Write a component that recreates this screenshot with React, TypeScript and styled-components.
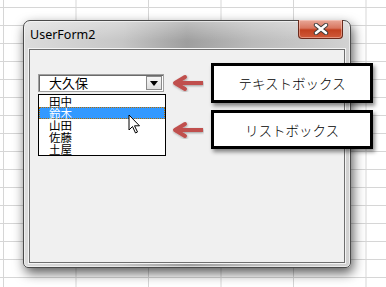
import React from "react";
import styled, { createGlobalStyle } from "styled-components";

const GlobalStyle = createGlobalStyle`
  html, body {
    margin: 0;
    padding: 0;
    width: 386px;
    height: 287px;
    overflow: hidden;
    background: #ffffff;
  }
`;

const Sheet = styled.div`
  position: relative;
  width: 386px;
  height: 287px;
  box-sizing: border-box;
  padding: 20px 0 0 23px;
  background-color: #ffffff;
  background-image: linear-gradient(to right, #d6d6d6 1px, transparent 1px),
    linear-gradient(to bottom, #d6d6d6 1px, transparent 1px);
  background-size: 72.5px 18px;
  background-position: 3px 7px;
`;

const Window = styled.div`
  position: relative;
  width: 328px;
  height: 248px;
  box-sizing: border-box;
  display: flex;
  flex-direction: column;
  border: 1px solid #4a4a4a;
  border-radius: 7px 7px 5px 5px;
  background: linear-gradient(
      to bottom,
      rgba(255, 255, 255, 0.35),
      rgba(255, 255, 255, 0) 20px
    ),
    linear-gradient(
      to right,
      #dcdcdc 0%,
      #c6c6c6 30%,
      #9e9e9e 50%,
      #bababa 70%,
      #d2d2d2 100%
    );
  box-shadow: 2px 5px 12px rgba(0, 0, 0, 0.65),
    inset 0 0 0 1px rgba(255, 255, 255, 0.55);
`;

const TitleBar = styled.div`
  height: 28px;
  display: flex;
  align-items: flex-start;
  padding-left: 6px;
`;

const Title = styled.span`
  margin-top: 6px;
  font-family: "Noto Sans", "Open Sans", sans-serif;
  font-size: 12.5px;
  line-height: 16px;
  color: #000;
`;

const CloseButton = styled.div`
  margin-left: auto;
  margin-right: 7px;
  margin-top: -1px;
  width: 45px;
  height: 19px;
  box-sizing: border-box;
  display: flex;
  align-items: center;
  justify-content: center;
  border: 1px solid #6b2a1c;
  border-top: none;
  border-radius: 0 0 4px 4px;
  background: linear-gradient(
    to bottom,
    #e9a898 0%,
    #d8765f 45%,
    #c2401f 55%,
    #cf5a3a 100%
  );
  box-shadow: inset 0 0 0 1px rgba(255, 220, 210, 0.45);
`;

const Client = styled.div`
  flex: 1;
  margin: 0 5px 4px 5px;
  box-sizing: border-box;
  border: 1px solid #6e6e6e;
  outline: 1px solid #f4f4f4;
  background: #f0f0f0;
  display: flex;
  flex-direction: column;
  align-items: flex-start;
  gap: 2px;
  padding: 24px 0 0 8px;
`;

const Combo = styled.div`
  width: 126px;
  height: 18px;
  box-sizing: border-box;
  border: 1px solid #a0a0a0;
  box-shadow: inset 1px 1px 0 #6a6a6a;
  background: #ffffff;
  display: flex;
  align-items: center;
  padding: 0 1px 0 10px;
`;

const ComboText = styled.span`
  flex: 1;
  font-family: "Noto Sans CJK JP", sans-serif;
  font-size: 13px;
  line-height: 16px;
  color: #000;
`;

const DropButton = styled.div`
  width: 16px;
  height: 14px;
  box-sizing: border-box;
  border: 1px solid #8a8a8a;
  background: linear-gradient(#f6f6f6, #dedede);
  display: flex;
  align-items: center;
  justify-content: center;
`;

const ListBox = styled.div`
  width: 128px;
  height: 62px;
  box-sizing: border-box;
  border: 1px solid #000;
  background: #fff;
  display: flex;
  flex-direction: column;
  position: relative;
`;

const ListItem = styled.div<{ $selected?: boolean }>`
  height: 12px;
  box-sizing: border-box;
  font-family: "Noto Sans CJK JP", sans-serif;
  font-size: 11.5px;
  color: ${(p) => (p.$selected ? "#ffffff" : "#000000")};
  background: ${(p) => (p.$selected ? "#3399ff" : "transparent")};
  border: ${(p) => (p.$selected ? "1px dotted #b36b00" : "none")};
  padding-left: ${(p) => (p.$selected ? "9px" : "10px")};
  line-height: ${(p) => (p.$selected ? "10px" : "12px")};
`;

const Pointer = styled.svg`
  position: absolute;
  left: 89px;
  top: 19px;
`;

const Annotations = styled.div`
  position: absolute;
  left: 172px;
  top: 63px;
  display: flex;
  flex-direction: column;
  gap: 7px;
`;

const Callout = styled.div`
  display: flex;
  align-items: center;
  gap: 7px;
`;

const LabelBox = styled.div<{ $h: number }>`
  width: 162px;
  height: ${(p) => p.$h}px;
  box-sizing: border-box;
  border: 3px solid #000;
  background: #fff;
  box-shadow: 2px 3px 4px rgba(0, 0, 0, 0.45);
  display: flex;
  align-items: center;
  justify-content: center;
  font-family: "Noto Sans CJK JP", sans-serif;
  font-weight: 300;
  font-size: 13.5px;
  color: #000;
`;

const Arrow = () => (
  <svg width="32" height="18" viewBox="0 0 32 18">
    <defs>
      <filter id="sh" x="-20%" y="-30%" width="140%" height="160%">
        <feDropShadow dx="0.5" dy="1" stdDeviation="0.8" floodOpacity="0.35" />
      </filter>
    </defs>
    <g
      stroke="#c0504d"
      strokeWidth="4"
      fill="none"
      strokeLinecap="round"
      strokeLinejoin="round"
      filter="url(#sh)"
    >
      <path d="M3 9 H31" strokeLinecap="butt" />
      <path d="M13 3 L3 9 L13 15" />
    </g>
  </svg>
);

const names = ["田中", "鈴木", "山田", "佐藤", "土屋"];

export default function App() {
  return (
    <>
      <GlobalStyle />
      <Sheet>
        <Window>
          <TitleBar>
            <Title>UserForm2</Title>
            <CloseButton>
              <svg width="16" height="12" viewBox="0 0 16 12">
                <path
                  d="M3 2 L13 10 M13 2 L3 10"
                  stroke="#3a3a3a"
                  strokeWidth="4.4"
                  strokeLinecap="round"
                />
                <path
                  d="M3 2 L13 10 M13 2 L3 10"
                  stroke="#ffffff"
                  strokeWidth="2.6"
                  strokeLinecap="round"
                />
              </svg>
            </CloseButton>
          </TitleBar>
          <Client>
            <Combo>
              <ComboText>大久保</ComboText>
              <DropButton>
                <svg width="8" height="5" viewBox="0 0 8 5">
                  <path d="M0 0 H8 L4 5 Z" fill="#000" />
                </svg>
              </DropButton>
            </Combo>
            <ListBox>
              {names.map((n, i) => (
                <ListItem key={n} $selected={i === 1}>
                  {n}
                </ListItem>
              ))}
              <Pointer width="13" height="20" viewBox="0 0 13 20">
                <path
                  d="M1 1 L1 16 L4.5 12.5 L7.5 19 L9.5 18 L6.5 11.8 L11.5 11.8 Z"
                  fill="#fff"
                  stroke="#000"
                  strokeWidth="1"
                  strokeLinejoin="round"
                />
              </Pointer>
            </ListBox>
          </Client>
        </Window>
        <Annotations>
          <Callout>
            <Arrow />
            <LabelBox $h={40}>テキストボックス</LabelBox>
          </Callout>
          <Callout>
            <Arrow />
            <LabelBox $h={39}>リストボックス</LabelBox>
          </Callout>
        </Annotations>
      </Sheet>
    </>
  );
}
